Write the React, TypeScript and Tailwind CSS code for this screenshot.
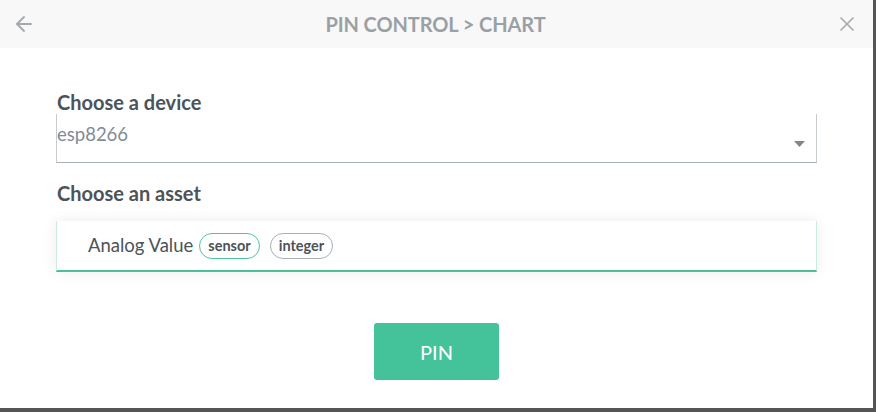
import { ArrowLeft, X } from 'lucide-react';

export default function App() {
  return (
    <div className="w-[876px] h-[412px] bg-[#555555] font-['Lato',sans-serif]">
      <div className="w-[873px] h-[408px] bg-white flex flex-col">
        {/* Header */}
        <div className="h-[48px] bg-[#f8f8f8] flex items-center justify-between px-[12px]">
          <ArrowLeft className="w-[24px] h-[24px] text-[#a3a9ae]" strokeWidth={1.8} />
          <p className="text-[20px] font-bold text-[#9aa1a6] tracking-[-0.1px]">PIN CONTROL &gt; CHART</p>
          <X className="w-[24px] h-[24px] text-[#a3a9ae] mr-[2px]" strokeWidth={1.6} />
        </div>

        {/* Body */}
        <div className="ml-[56px] w-[761px] flex flex-col">
          <p className="mt-[42px] text-[20px] font-bold text-[#4c5359] leading-[24px] pl-[1px]">Choose a device</p>
          <div className="h-[49px] border-l border-r border-b border-[#c6cbd0] border-b-[#aab2b9] flex justify-between items-start pr-[11px]">
            <span className="mt-[8px] text-[18.5px] text-[#7f8b96] leading-[24px]">esp8266</span>
            <svg width="11" height="6" viewBox="0 0 11 6" className="mt-[27px]">
              <path d="M0 0 H11 L5.5 6 Z" fill="#7c8792" />
            </svg>
          </div>

          <p className="mt-[18px] text-[20px] font-bold text-[#4c5359] leading-[24px] pl-[1px]">Choose an asset</p>
          <div className="mt-[16px] h-[51px] bg-white border-l border-l-[#c9ecdf] border-r border-r-[#c9ecdf] border-b-2 border-b-[#4dbf94] shadow-[0_0_14px_rgba(0,0,0,0.08)] flex items-center pl-[31px] gap-[6px]">
            <span className="text-[18.5px] text-[#4c5359]">Analog Value</span>
            <span className="h-[26px] px-[8px] flex items-center rounded-full border border-[#4cc79c] text-[14.5px] font-bold text-[#4c5359]">sensor</span>
            <span className="ml-[4px] h-[26px] px-[8px] flex items-center rounded-full border border-[#a9b0b6] text-[14.5px] font-bold text-[#4c5359]">integer</span>
          </div>
        </div>

        <div className="flex justify-center mt-[51px]">
          <button className="w-[125px] h-[57px] rounded-[3px] bg-[#44c39a] text-white text-[20px]">PIN</button>
        </div>
      </div>
    </div>
  );
}
